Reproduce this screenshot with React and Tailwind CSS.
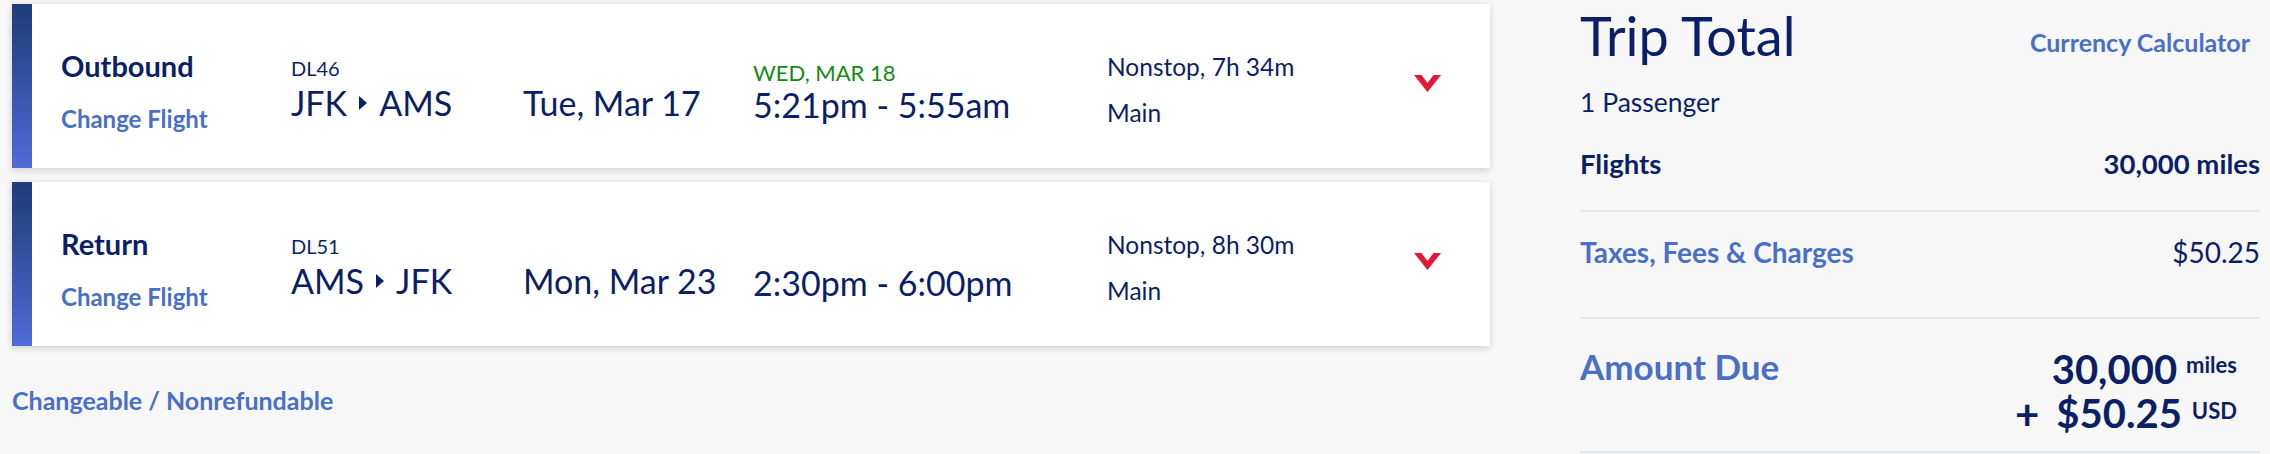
import React from "react";

const NAVY = "text-[#0b1f66]";

function Chevron() {
  return (
    <svg width="27" height="17" viewBox="0 0 27 17">
      <polygon points="0,0 7.5,0 13.5,8 19.5,0 27,0 13.5,17" fill="#e31837" />
    </svg>
  );
}

function Arrow() {
  return (
    <svg width="8" height="14" viewBox="0 0 8 14" className="mx-[12px]">
      <polygon points="0,0 8,7 0,14" fill="#0b1f66" />
    </svg>
  );
}

function FlightCard({ label, flight, from, to, date, nextDay, time, duration, cabin }) {
  return (
    <div className="flex h-[164px] bg-white shadow-[0_2px_7px_rgba(0,0,0,0.16)]">
      <div className="w-[20px] flex-none bg-linear-to-b from-[#1f3b78] to-[#4f6cd9]" />
      <div className={`flex pl-[29px] ${NAVY}`}>
        <div className="w-[230px] flex flex-col pt-[47px]">
          <div className="text-[29px] leading-none font-bold">{label}</div>
          <div className="mt-[27px] text-[24px] leading-none font-bold text-[#4a6fc7]">Change Flight</div>
        </div>
        <div className="w-[232px] flex flex-col pt-[54px]">
          <div className="text-[20px] leading-none">{flight}</div>
          <div className="mt-[8px] text-[34px] leading-none flex items-center">
            <span>{from}</span>
            <Arrow />
            <span>{to}</span>
          </div>
        </div>
        <div className="w-[230px] pt-[82px] text-[34px] leading-none">{date}</div>
        <div className="w-[354px] flex flex-col pt-[58px]">
          <div className="h-[22px] text-[22px] leading-none text-[#138a13]">{nextDay}</div>
          <div className="mt-[4px] text-[34px] leading-none">{time}</div>
        </div>
        <div className="w-[307px] flex flex-col pt-[51px]">
          <div className="text-[24.5px] leading-none">{duration}</div>
          <div className="mt-[21px] text-[24.5px] leading-none">{cabin}</div>
        </div>
        <div className="pt-[71px]">
          <Chevron />
        </div>
      </div>
    </div>
  );
}

export default function App() {
  return (
    <div className="w-[2270px] h-[454px] bg-[#f7f7f7] flex overflow-hidden font-['Lato','Noto_Sans',sans-serif]">
      <div className="w-[1490px] flex-none pl-[12px] pt-[4px] flex flex-col">
        <FlightCard
          label="Outbound"
          flight="DL46"
          from="JFK"
          to="AMS"
          date="Tue, Mar 17"
          nextDay="WED, MAR 18"
          time="5:21pm - 5:55am"
          duration="Nonstop, 7h 34m"
          cabin="Main"
        />
        <div className="mt-[14px]">
          <FlightCard
            label="Return"
            flight="DL51"
            from="AMS"
            to="JFK"
            date="Mon, Mar 23"
            nextDay=""
            time="2:30pm - 6:00pm"
            duration="Nonstop, 8h 30m"
            cabin="Main"
          />
        </div>
        <div className="mt-[42px] text-[25px] leading-none font-bold text-[#4a6fc7]">Changeable / Nonrefundable</div>
      </div>

      <div className={`ml-[90px] w-[680px] flex-none flex flex-col ${NAVY}`}>
        <div className="flex justify-between items-start">
          <div className="mt-[9px] text-[54px] leading-none">Trip Total</div>
          <div className="mt-[30px] mr-[10px] text-[25px] leading-none font-bold text-[#4a6fc7]">Currency Calculator</div>
        </div>
        <div className="mt-[26px] text-[26.5px] leading-none">1 Passenger</div>
        <div className="mt-[34px] flex justify-between text-[27.5px] leading-none font-bold">
          <span>Flights</span>
          <span>30,000 miles</span>
        </div>
        <div className="mt-[33px] h-[2px] bg-[#e3e7ef]" />
        <div className="mt-[26px] flex justify-between text-[28px] leading-none">
          <span className="font-bold text-[#4a6fc7]">Taxes, Fees &amp; Charges</span>
          <span>$50.25</span>
        </div>
        <div className="mt-[51px] h-[2px] bg-[#e3e7ef]" />
        <div className="mt-[30px] flex justify-between items-start">
          <div className="text-[35px] leading-none font-bold text-[#4a6fc7]">Amount Due</div>
          <div className="mr-[23px] flex flex-col items-end font-bold">
            <div className="flex items-start">
              <span className="text-[40px] leading-none">30,000</span>
              <span className="ml-[9px] mt-[5px] text-[22px] leading-none">miles</span>
            </div>
            <div className="mt-[4px] flex items-start">
              <span className="text-[42px] leading-none mr-[17px]">+</span>
              <span className="text-[40px] leading-none">$50.25</span>
              <span className="ml-[10px] mt-[7px] text-[22px] leading-none">USD</span>
            </div>
          </div>
        </div>
        <div className="mt-[16px] h-[2px] bg-[#e3e7ef]" />
      </div>
    </div>
  );
}
